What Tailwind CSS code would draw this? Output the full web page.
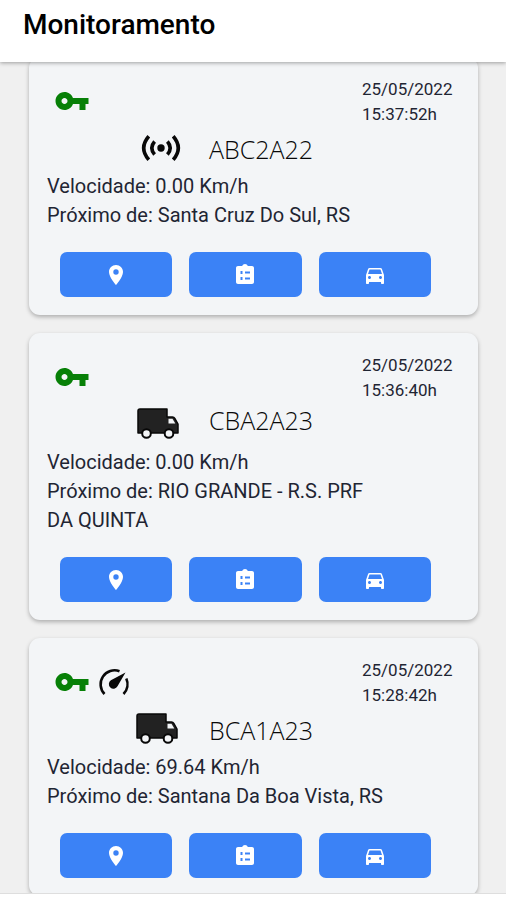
<!DOCTYPE html>
<html lang="pt-BR">
<head>
<meta charset="utf-8">
<meta name="viewport" content="width=device-width, initial-scale=1">
<title>Monitoramento</title>
<script src="https://cdn.jsdelivr.net/npm/@tailwindcss/browser@4"></script>
</head>
<body class="flex h-screen flex-col overflow-hidden bg-[#f0f0f0] font-['Roboto',sans-serif] text-[#1f2533]">
<svg class="hidden" aria-hidden="true">
  <symbol id="key" viewBox="0 0 24 24"><path fill="currentColor" d="M12.65 10C11.83 7.67 9.61 6 7 6c-3.31 0-6 2.69-6 6s2.69 6 6 6c2.61 0 4.83-1.67 5.65-4H17v4h4v-4h2v-4H12.65zM7 14c-1.1 0-2-.9-2-2s.9-2 2-2 2 .9 2 2-.9 2-2 2z"/></symbol>
  <symbol id="pin" viewBox="0 0 24 24"><path fill="currentColor" d="M12 2C8.13 2 5 5.13 5 9c0 5.25 7 13 7 13s7-7.75 7-13c0-3.87-3.13-7-7-7zm0 9.7a2.7 2.7 0 1 1 0-5.4 2.7 2.7 0 0 1 0 5.4z"/></symbol>
  <symbol id="list" viewBox="0 0 24 24"><path fill="currentColor" fill-rule="evenodd" d="M19 3h-4.18C14.4 1.84 13.3 1 12 1s-2.4.84-2.82 2H5c-1.1 0-2 .9-2 2v14c0 1.1.9 2 2 2h14c1.1 0 2-.9 2-2V5c0-1.1-.9-2-2-2zM7.500 8h2v3h-2zM12 8.500h5v2h-5zM7.500 14h2v3h-2zM12 14.500h5v2h-5z"/></symbol>
  <symbol id="car" viewBox="0 0 24 24"><path fill="currentColor" d="M18.92 6.01C18.72 5.42 18.16 5 17.5 5h-11c-.66 0-1.21.42-1.42 1.01L3 12v8c0 .55.45 1 1 1h1c.55 0 1-.45 1-1v-1h12v1c0 .55.45 1 1 1h1c.55 0 1-.45 1-1v-8l-2.08-5.99zM6.500 16c-.83 0-1.5-.67-1.5-1.5S5.67 13 6.5 13s1.5.67 1.5 1.5S7.33 16 6.5 16zm11 0c-.83 0-1.5-.67-1.5-1.5s.67-1.5 1.5-1.5 1.5.67 1.5 1.5-.67 1.5-1.5 1.5zM5 11l1.5-4.5h11L19 11H5z"/></symbol>
  <symbol id="signal" viewBox="0 0 40 26"><circle cx="20" cy="13" r="3.7" fill="currentColor"/><path fill="none" stroke="currentColor" stroke-width="3.6" d="M13.6 6.5Q8 13 13.6 19.5M26.4 6.5Q32 13 26.4 19.5M7.8 1.2Q-2.4 13 7.8 24.8M32.2 1.2Q42.4 13 32.2 24.8"/></symbol>
  <symbol id="truck" viewBox="0 0 42 31"><path fill="#222" stroke="#080808" stroke-width="1.5" stroke-linejoin="round" d="M3 1h27v8h5.5q1.5 0 2.3 1.3L41 16v9H1V3q0-2 2-2z"/><path fill="#f3f5f7" d="M31.5 10.8h4l2.8 4.7h-6.8z"/><g fill="#f3f5f7" stroke="#080808" stroke-width="2"><circle cx="9.5" cy="25.5" r="4.3"/><circle cx="32" cy="25.5" r="4.3"/></g></symbol>
  <symbol id="gauge" viewBox="0 0 32 28"><path fill="none" stroke="currentColor" stroke-width="2.6" d="M6.5 26A14 14 0 0 1 21.5 3.2M28.3 10.5A14 14 0 0 1 25.5 26"/><path fill="currentColor" d="M27.5 4.5L19.5 18.3a4.6 4.6 0 1 1-6.6-6z"/></symbol>
</svg>

<header class="z-10 shrink-0 bg-white px-[23px] pt-2 pb-5 shadow-[0_1px_4px_rgba(0,0,0,0.35)]">
  <h1 class="text-[28px] leading-[34px] font-medium text-black">Monitoramento</h1>
</header>

<main class="-mt-[5px] flex min-h-0 flex-1 flex-col gap-[18px] overflow-hidden pr-7 pl-[29px]">
  <article class="shrink-0 rounded-[11px] bg-[#f3f5f7] px-[18px] pt-5 pb-[18px] shadow-[0_2px_4px_rgba(0,0,0,0.28)]">
    <div class="flex h-[50px] items-start justify-between pr-[10px] pl-[7px]">
      <div class="flex items-center pt-[6px] text-[#078007]"><svg class="size-9" role="img" aria-label="Ignição ligada"><use href="#key"/></svg></div>
      <time class="w-[88px] text-[17px] leading-[25px]">25/05/2022<br>15:37:52h</time>
    </div>
    <div class="flex h-[38px] items-end pl-[94px] text-[#080808]">
      <svg class="mb-1 h-[26px] w-10" aria-hidden="true"><use href="#signal"/></svg>
      <h2 class="ml-7 font-['Open_Sans',sans-serif] text-[25px] leading-8 font-light">ABC2A22</h2>
    </div>
    <div class="mt-[7px] text-[20px] leading-[29px]"><p>Velocidade: 0.00 Km/h</p><p>Próximo de: Santa Cruz Do Sul, RS</p></div>
    <div class="mt-[22px] grid grid-cols-3 gap-[17px] pr-[29px] pl-[13px] text-white">
      <button type="button" aria-label="Localização" class="flex h-[45px] items-center justify-center rounded-[7px] bg-[#3b82f6]"><svg class="size-6"><use href="#pin"/></svg></button>
      <button type="button" aria-label="Relatório" class="flex h-[45px] items-center justify-center rounded-[7px] bg-[#3b82f6]"><svg class="size-6"><use href="#list"/></svg></button>
      <button type="button" aria-label="Veículo" class="flex h-[45px] items-center justify-center rounded-[7px] bg-[#3b82f6]"><svg class="size-6"><use href="#car"/></svg></button>
    </div>
  </article>

  <article class="shrink-0 rounded-[11px] bg-[#f3f5f7] px-[18px] pt-5 pb-[18px] shadow-[0_2px_4px_rgba(0,0,0,0.28)]">
    <div class="flex h-[50px] items-start justify-between pr-[10px] pl-[7px]">
      <div class="flex items-center pt-[6px] text-[#078007]"><svg class="size-9" role="img" aria-label="Ignição ligada"><use href="#key"/></svg></div>
      <time class="w-[88px] text-[17px] leading-[25px]">25/05/2022<br>15:36:40h</time>
    </div>
    <div class="flex h-[38px] items-start pt-px pl-[90px] text-[#080808]">
      <svg class="mt-1 h-[31px] w-[42px]" aria-hidden="true"><use href="#truck"/></svg>
      <h2 class="ml-[30px] font-['Open_Sans',sans-serif] text-[25px] leading-8 font-light">CBA2A23</h2>
    </div>
    <div class="mt-[7px] text-[20px] leading-[29px]"><p>Velocidade: 0.00 Km/h</p><p class="pr-20">Próximo de: RIO GRANDE - R.S. PRF DA QUINTA</p></div>
    <div class="mt-[22px] grid grid-cols-3 gap-[17px] pr-[29px] pl-[13px] text-white">
      <button type="button" aria-label="Localização" class="flex h-[45px] items-center justify-center rounded-[7px] bg-[#3b82f6]"><svg class="size-6"><use href="#pin"/></svg></button>
      <button type="button" aria-label="Relatório" class="flex h-[45px] items-center justify-center rounded-[7px] bg-[#3b82f6]"><svg class="size-6"><use href="#list"/></svg></button>
      <button type="button" aria-label="Veículo" class="flex h-[45px] items-center justify-center rounded-[7px] bg-[#3b82f6]"><svg class="size-6"><use href="#car"/></svg></button>
    </div>
  </article>

  <article class="shrink-0 rounded-[11px] bg-[#f3f5f7] px-[18px] pt-5 pb-[18px] shadow-[0_2px_4px_rgba(0,0,0,0.28)]">
    <div class="flex h-[50px] items-start justify-between pr-[10px] pl-[7px]">
      <div class="flex items-center gap-2 pt-[6px] text-[#078007]"><svg class="size-9" role="img" aria-label="Ignição ligada"><use href="#key"/></svg><svg class="h-7 w-8 text-[#080808]" role="img" aria-label="Em movimento"><use href="#gauge"/></svg></div>
      <time class="w-[88px] text-[17px] leading-[25px]">25/05/2022<br>15:28:42h</time>
    </div>
    <div class="flex h-[38px] items-end pl-[89px] text-[#080808]">
      <svg class="mb-[2px] h-[31px] w-[42px]" aria-hidden="true"><use href="#truck"/></svg>
      <h2 class="ml-[31px] font-['Open_Sans',sans-serif] text-[25px] leading-8 font-light">BCA1A23</h2>
    </div>
    <div class="mt-[7px] text-[20px] leading-[29px]"><p>Velocidade: 69.64 Km/h</p><p>Próximo de: Santana Da Boa Vista, RS</p></div>
    <div class="mt-[22px] grid grid-cols-3 gap-[17px] pr-[29px] pl-[13px] text-white">
      <button type="button" aria-label="Localização" class="flex h-[45px] items-center justify-center rounded-[7px] bg-[#3b82f6]"><svg class="size-6"><use href="#pin"/></svg></button>
      <button type="button" aria-label="Relatório" class="flex h-[45px] items-center justify-center rounded-[7px] bg-[#3b82f6]"><svg class="size-6"><use href="#list"/></svg></button>
      <button type="button" aria-label="Veículo" class="flex h-[45px] items-center justify-center rounded-[7px] bg-[#3b82f6]"><svg class="size-6"><use href="#car"/></svg></button>
    </div>
  </article>
</main>
<footer class="z-10 h-[7px] shrink-0 border-t border-[#dedede] bg-white"></footer>
</body>
</html>
